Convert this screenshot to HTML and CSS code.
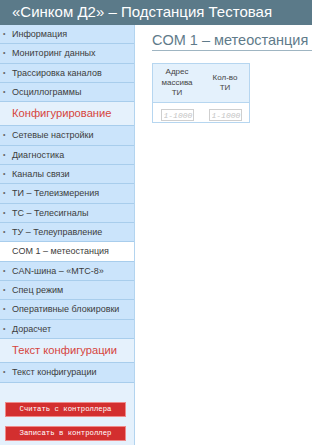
FILE: index.html
```html
<!DOCTYPE html>
<html lang="ru">
<head>
  <meta charset="UTF-8" />
  <meta name="viewport" content="width=device-width, initial-scale=1" />
  <title>Синком Д2 - COM 1</title>
  <link rel="stylesheet" href="styles.css">
</head>
<body>

  <div class="topbar">«Синком Д2» – Подстанция Тестовая</div>

  <div class="layout">
    <div class="sidebar">
      <ul class="menu">
        <li class="menu-item">Информация</li>
        <li class="menu-item">Мониторинг данных</li>
        <li class="menu-item">Трассировка каналов</li>
        <li class="menu-item">Осциллограммы</li>
        <li class="menu-section">Конфигурирование</li>
        <li class="menu-item">Сетевые настройки</li>
        <li class="menu-item">Диагностика</li>
        <li class="menu-item">Каналы связи</li>
        <li class="menu-item">ТИ – Телеизмерения</li>
        <li class="menu-item">ТС – Телесигналы</li>
        <li class="menu-item">ТУ – Телеуправление</li>
        <li class="menu-item active">COM 1 – метеостанция</li>
        <li class="menu-item">CAN-шина – «МТС-8»</li>
        <li class="menu-item">Спец режим</li>
        <li class="menu-item">Оперативные блокировки</li>
        <li class="menu-item">Дорасчет</li>
        <li class="menu-section">Текст конфигурации</li>
        <li class="menu-item">Текст конфигурации</li>
      </ul>

      <div class="actions">
        <button class="btn-red">Считать с контроллера</button>
        <button class="btn-red">Записать в контроллер</button>
      </div>
    </div>

    <div class="content">
      <h1 class="page-title">COM 1 – метеостанция</h1>

      <table class="cfg-table">
        <thead>
          <tr>
            <th>Адрес<br>массива<br>ТИ</th>
            <th>Кол-во<br>ТИ</th>
          </tr>
        </thead>
        <tbody>
          <tr>
            <td><input type="text" placeholder="1-1000" /></td>
            <td><input type="text" placeholder="1-1000" /></td>
          </tr>
        </tbody>
      </table>
    </div>
  </div>

</body>
</html>
```

FILE: styles.css
```css
body {
  margin: 0;
  font-family: 'Liberation Sans', Arial, sans-serif;
  color: #3c3c3c;
  background: white;
}

.topbar {
  height: 25px;
  line-height: 24px;
  background: #5b7a89;
  color: white;
  font-size: 15px;
  padding-left: 12px;
  white-space: nowrap;
  overflow: hidden;
}

.layout {
  display: flex;
  min-height: 420px;
}

.sidebar {
  width: 134px;
  flex-shrink: 0;
  background: #e5f1fc;
  border-right: 1px solid #b3d4ef;
}

.menu {
  list-style: none;
  margin: 0;
  padding: 0;
}

.menu-item {
  height: 18.35px;
  line-height: 18px;
  font-size: 9px;
  padding-left: 12px;
  background: #cbe4fb;
  border-bottom: 1px solid #a8cdec;
  position: relative;
  white-space: nowrap;
}

.menu-item::before {
  content: "•";
  position: absolute;
  left: 3px;
  font-size: 7px;
  color: #666;
}

.menu-item.active {
  background: white;
}

.menu-item.active::before {
  content: none;
}

.menu-section {
  height: 23px;
  line-height: 23px;
  font-size: 11.2px;
  padding-left: 12px;
  color: #d6453d;
  background: #e5f1fc;
  border-bottom: 1px solid #a8cdec;
}

.actions {
  padding: 19px 0 0 5px;
}

.btn-red {
  display: block;
  width: 121px;
  height: 15px;
  margin-bottom: 9px;
  padding: 0;
  background: #d32f2f;
  border: 1px solid #ef8a8a;
  color: white;
  font-family: 'Liberation Mono', monospace;
  font-size: 7.3px;
  cursor: pointer;
}

.content {
  flex: 1;
  padding-left: 17px;
  overflow: hidden;
}

.page-title {
  margin: 7px 0 0;
  font-size: 14.5px;
  font-weight: normal;
  color: #5f7b8a;
  line-height: 17px;
  padding-bottom: 1px;
  border-bottom: 1px solid #9fb5c2;
  white-space: nowrap;
}

.cfg-table {
  margin-top: 12px;
  border-collapse: collapse;
  border: 1px solid #b6d6f0;
}

.cfg-table th {
  width: 48px;
  height: 38px;
  padding: 0;
  background: #e4f1fc;
  font-size: 8px;
  font-weight: normal;
  line-height: 10.5px;
  color: #444;
  border-bottom: 1px solid #b6d6f0;
}

.cfg-table td {
  height: 19px;
  padding: 0;
  text-align: center;
}

.cfg-table input {
  width: 33px;
  height: 12px;
  box-sizing: border-box;
  padding: 0 0 0 2px;
  border: 1px solid #cfcfcf;
  font-family: 'Liberation Mono', monospace;
  font-style: italic;
  font-size: 8px;
}

.cfg-table input::placeholder {
  color: #c4c4c4;
}
```
